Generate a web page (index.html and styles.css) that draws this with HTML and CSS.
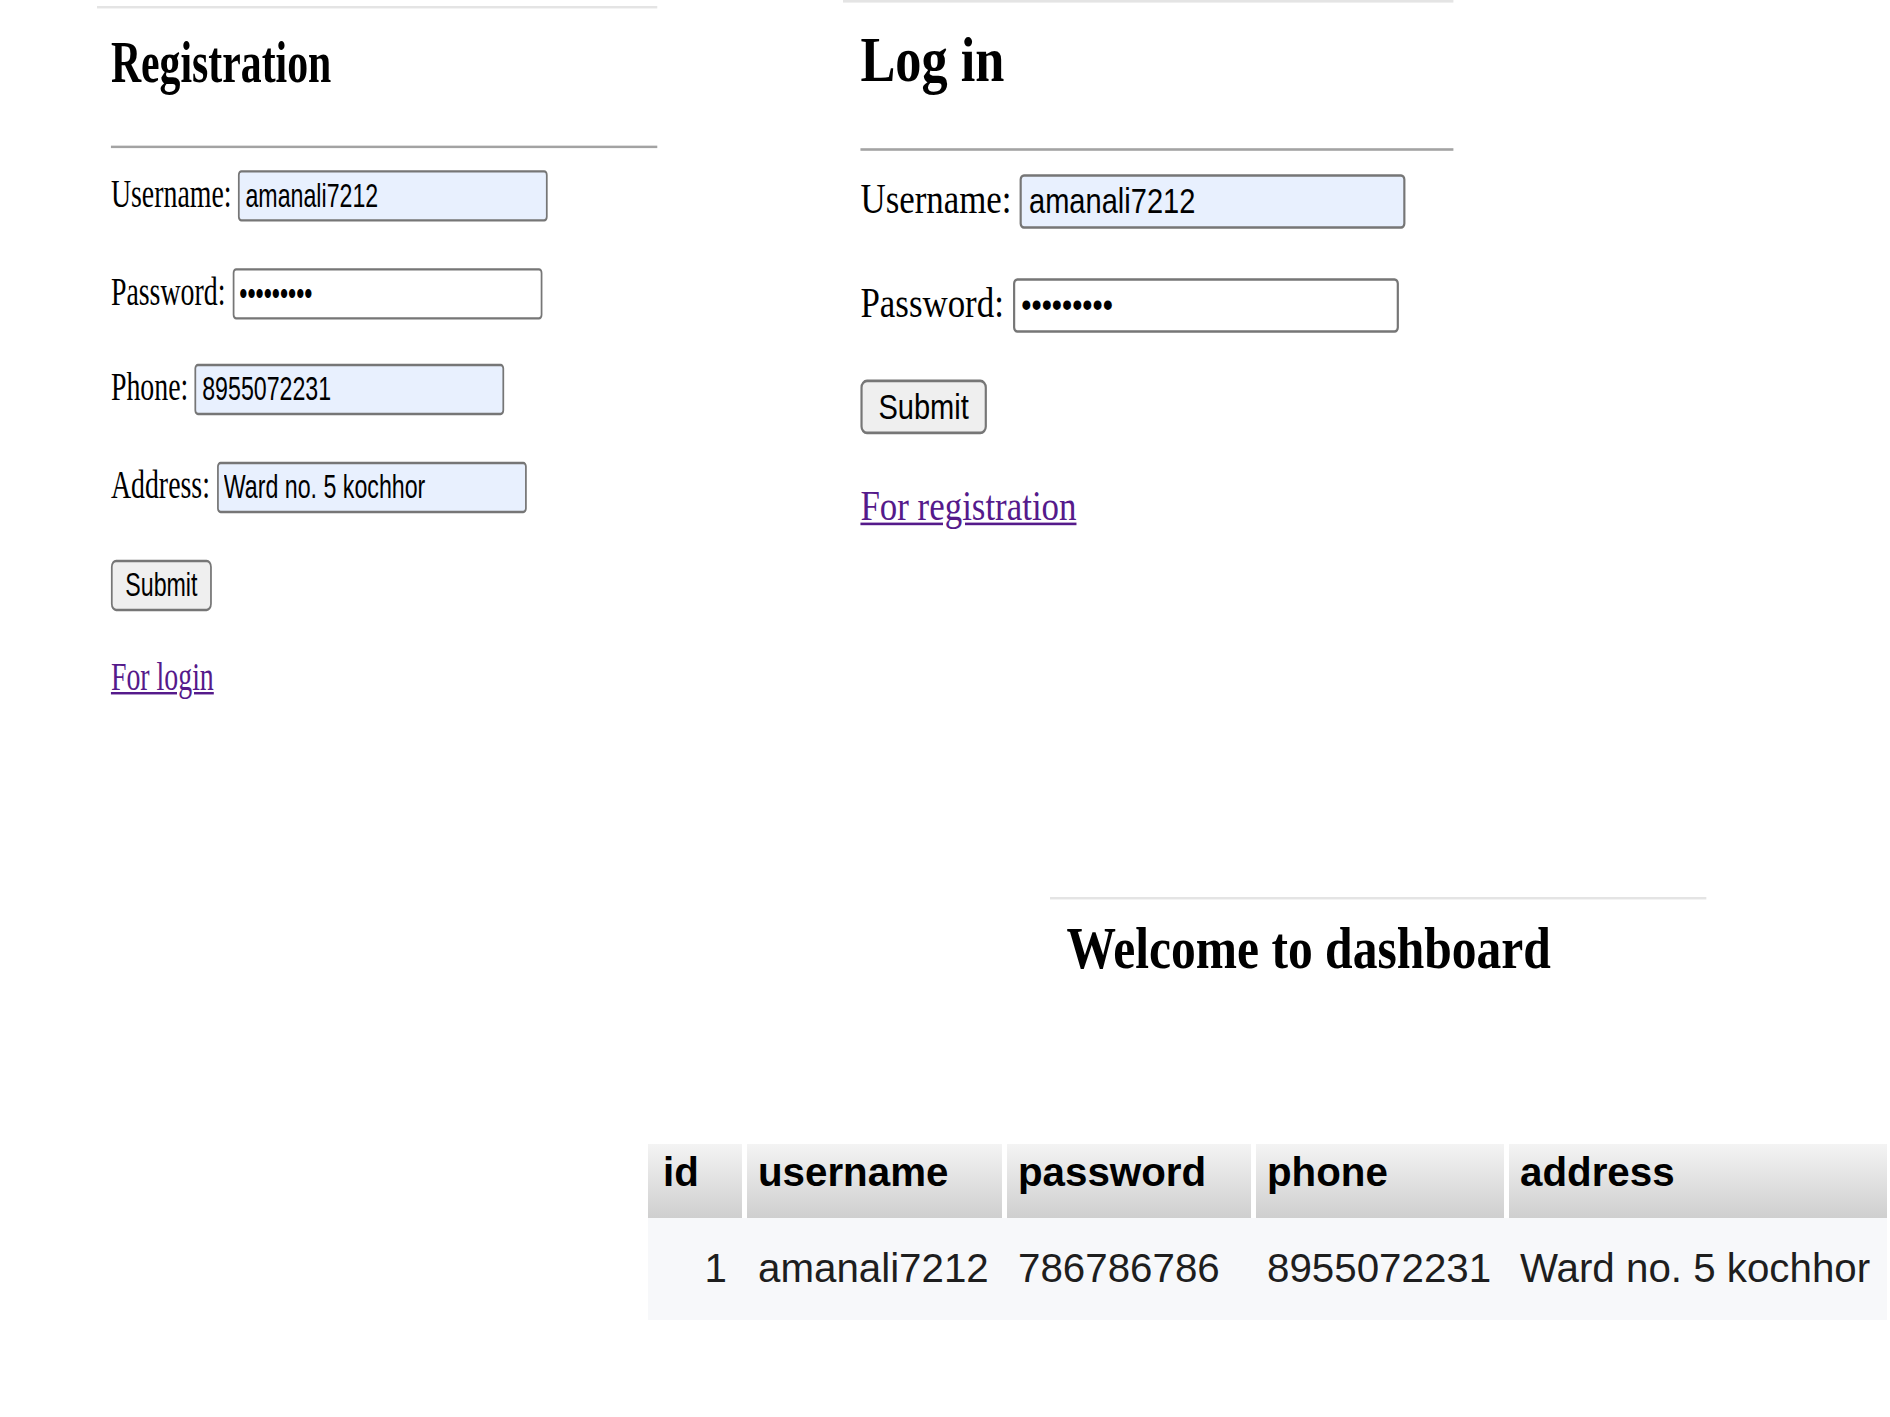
FILE: index.html
```html
<!DOCTYPE html>
<html lang="en">
<head>
<meta charset="utf-8">
<title>Registration / Log in / Dashboard</title>
<link rel="stylesheet" href="styles.css">
</head>
<body>
<main class="collage">
  <div class="top-row">
    <section class="shot shot-reg">
      <div class="page page-reg">
        <h2 class="title">Registration</h2>
        <hr class="rule">
        <form class="form">
          <p class="row"><label>Username:</label><input class="field filled" type="text" value="amanali7212"></p>
          <p class="row"><label>Password:</label><input class="field" type="password" value="786786786"></p>
          <p class="row"><label>Phone:</label><input class="field filled" type="text" value="8955072231"></p>
          <p class="row"><label>Address:</label><input class="field filled" type="text" value="Ward no. 5 kochhor"></p>
          <p class="row"><button class="btn" type="button">Submit</button></p>
        </form>
        <p class="link-row"><a class="link" href="#">For login</a></p>
      </div>
    </section>
    <section class="shot shot-login">
      <div class="page page-login">
        <h2 class="title">Log in</h2>
        <hr class="rule">
        <form class="form">
          <p class="row"><label>Username:</label><input class="field field-login filled" type="text" value="amanali7212"></p>
          <p class="row"><label>Password:</label><input class="field field-login" type="password" value="786786786"></p>
          <p class="row"><button class="btn" type="button">Submit</button></p>
        </form>
        <p class="link-row"><a class="link" href="#">For registration</a></p>
      </div>
    </section>
  </div>
  <section class="shot shot-dash">
    <div class="page page-dash">
      <h2 class="title title-dash">Welcome to dashboard</h2>
    </div>
  </section>
  <div class="table-wrap">
    <table class="data">
      <colgroup>
        <col class="c-id"><col class="c-user"><col class="c-pass"><col class="c-phone"><col class="c-addr">
      </colgroup>
      <thead>
        <tr><th class="th-id">id</th><th>username</th><th>password</th><th>phone</th><th>address</th></tr>
      </thead>
      <tbody>
        <tr><td class="num">1</td><td>amanali7212</td><td>786786786</td><td>8955072231</td><td>Ward no. 5 kochhor</td></tr>
      </tbody>
    </table>
  </div>
</main>
</body>
</html>
```
FILE: styles.css
```css
html, body {
  margin: 0;
  padding: 0;
  background: #ffffff;
}

.collage {
  width: 1890px;
}

.top-row {
  display: flex;
  align-items: flex-start;
  height: 897px;
}

.shot {
  flex: none;
}

.shot-reg {
  width: 560px;
  height: 735px;
  margin: 6px 0 0 97px;
}

.shot-login {
  width: 610px;
  height: 572px;
  margin-left: 186px;
}

.shot-dash {
  width: 656px;
  height: 247px;
  margin-left: 1049.5px;
}

/* each "shot" is a stretched capture of a plain page */
.page {
  box-sizing: border-box;
  transform-origin: 0 0;
  border-top: 1px solid #e4e4e4;
  padding-left: 8px;
  font-family: "Liberation Serif", "Times New Roman", serif;
  color: #000;
}

.page-reg {
  width: 322px;
  height: 300px;
  transform: scale(1.74, 2.45);
}

.page-login {
  width: 280px;
  height: 220px;
  transform: scale(2.18, 2.6);
}

.page-dash {
  width: 318px;
  height: 101px;
  transform: scale(2.064, 2.44);
}

.title {
  margin: 7.5px 0 0;
  font-size: 24px;
  line-height: 28px;
  font-weight: bold;
}

.title-dash {
  margin-top: 5.6px;
}

.rule {
  margin: 20.8px 0 0;
  height: 0;
  border: 0;
  border-top: 1px solid #a3a3a3;
}

.form {
  margin: 9px 0 0;
}

.row {
  display: flex;
  align-items: baseline;
  gap: 4px;
  margin: 0 0 18.6px;
  font-size: 16px;
  line-height: 18px;
}

.field {
  box-sizing: border-box;
  width: 178px;
  height: 21px;
  margin: 0;
  padding: 1px 3px;
  border: 1px solid #767676;
  border-radius: 2px;
  background: #ffffff;
  color: #000;
  font-family: "Liberation Sans", Arial, sans-serif;
  font-size: 13.333px;
}

.field-login {
  width: 177px;
}

.field.filled {
  background: #e8f0fe;
}

.btn {
  box-sizing: border-box;
  width: 58px;
  height: 21px;
  margin: 0;
  padding: 0;
  border: 1px solid #767676;
  border-radius: 3px;
  background: #efefef;
  color: #000;
  font-family: "Liberation Sans", Arial, sans-serif;
  font-size: 13.333px;
}

.link-row {
  margin: 0;
  font-size: 16px;
  line-height: 18px;
}

.link {
  color: #551a8b;
  text-decoration: underline;
}

/* dashboard table */
.table-wrap {
  margin-left: 648px;
  width: 1239px;
}

.data {
  width: 1239px;
  table-layout: fixed;
  border-collapse: separate;
  border-spacing: 0;
  font-family: "Liberation Sans", Arial, sans-serif;
  font-size: 40.3px;
  line-height: 46px;
}

.c-id { width: 94px; }
.c-user { width: 260px; }
.c-pass { width: 249px; }
.c-phone { width: 253px; }
.c-addr { width: 383px; }

.data th {
  padding: 6px 12px 22px;
  text-align: left;
  vertical-align: top;
  font-weight: bold;
  color: #000;
  background: linear-gradient(to bottom, #f4f4f4, #cfcfcf);
  white-space: nowrap;
}

.data th.th-id {
  padding-left: 15px;
}

.data th + th {
  border-left: 5px solid #ffffff;
  padding-left: 11px;
}

.data td {
  padding: 28px 12px;
  background: #f7f8fa;
  color: #1e1e1e;
  white-space: nowrap;
  vertical-align: middle;
}

.data td + td {
  border-left: 5px solid transparent;
  padding-left: 11px;
}

.data td.num {
  text-align: right;
  padding-right: 15px;
}
```
